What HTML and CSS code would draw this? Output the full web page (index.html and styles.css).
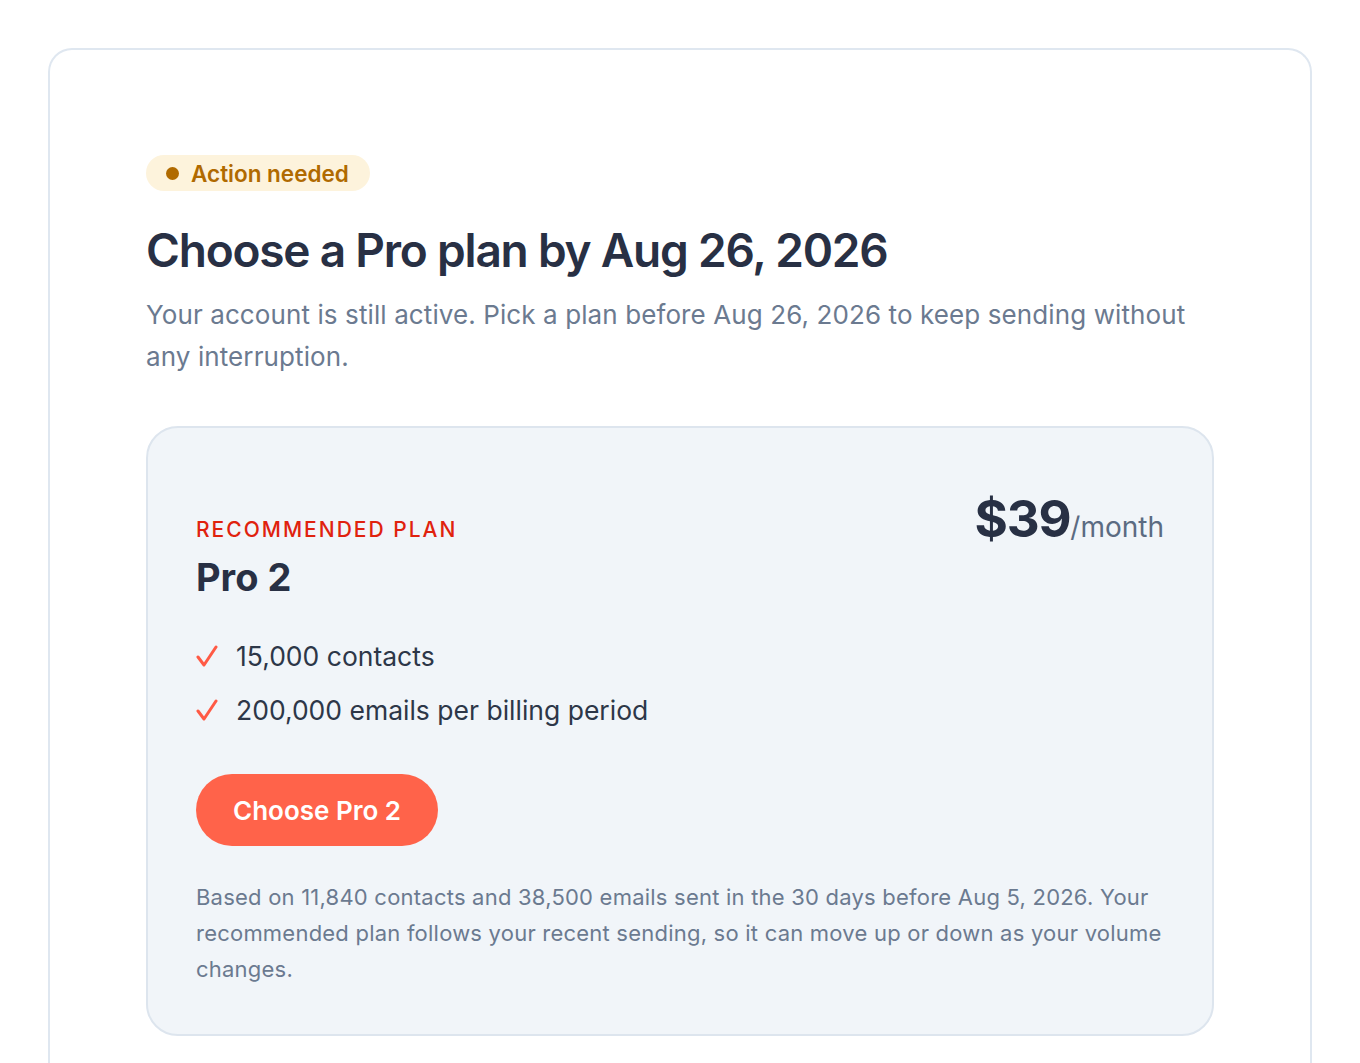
FILE: index.html
```html
<!DOCTYPE html>
<html lang="en">
<head>
    <meta charset="UTF-8">
    <meta name="viewport" content="width=device-width, initial-scale=1.0">
    <title>Choose a Pro plan</title>
    <link rel="stylesheet" href="styles.css">
</head>
<body>
    <div class="panel">
        <span class="badge"><span class="badge-dot"></span>Action needed</span>
        <h1>Choose a Pro plan by Aug 26, 2026</h1>
        <p class="lead">Your account is still active. Pick a plan before Aug 26, 2026 to keep sending without any interruption.</p>

        <section class="plan">
            <div class="plan-top">
                <div>
                    <div class="plan-label">Recommended plan</div>
                    <h2>Pro 2</h2>
                </div>
                <div class="price"><strong>$39</strong>/month</div>
            </div>

            <ul class="features">
                <li>
                    <svg class="check" viewBox="0 0 22 24" width="22" height="24"><path d="M2 13 L8 21 L20 3" fill="none" stroke="#ff5a45" stroke-width="3" stroke-linecap="round" stroke-linejoin="round"/></svg>
                    15,000 contacts
                </li>
                <li>
                    <svg class="check" viewBox="0 0 22 24" width="22" height="24"><path d="M2 13 L8 21 L20 3" fill="none" stroke="#ff5a45" stroke-width="3" stroke-linecap="round" stroke-linejoin="round"/></svg>
                    200,000 emails per billing period
                </li>
            </ul>

            <button type="button" class="choose">Choose Pro 2</button>

            <p class="note">Based on 11,840 contacts and 38,500 emails sent in the 30 days before Aug 5, 2026. Your recommended plan follows your recent sending, so it can move up or down as your volume changes.</p>
        </section>
    </div>
</body>
</html>
```

FILE: styles.css
```css
body {
    font-family: Inter, "Noto Sans", sans-serif;
    background-color: white;
    margin: 0;
    padding: 48px 48px 0 48px;
    color: #283044;
}

.panel {
    border: 2px solid #dfe7f0;
    border-bottom: none;
    border-radius: 24px 24px 0 0;
    padding: 105px 96px 40px 96px;
    min-height: 1000px;
}

.badge {
    display: inline-flex;
    align-items: center;
    gap: 12px;
    height: 36px;
    padding: 0 21px 0 20px;
    border-radius: 18px;
    background-color: #fdf3dc;
    color: #b06a00;
    font-size: 22.5px;
    font-weight: 600;
}

.badge-dot {
    width: 13px;
    height: 13px;
    border-radius: 50%;
    background-color: #b06a00;
}

h1 {
    margin: 30px 0 0 0;
    font-size: 46px;
    font-weight: 600;
    letter-spacing: -1.2px;
    line-height: 58px;
}

.lead {
    margin: 15px 0 0 0;
    font-size: 26px;
    letter-spacing: 0.1px;
    line-height: 42px;
    color: #6b7a90;
    max-width: 1060px;
}

.plan {
    margin-top: 48px;
    background-color: #f1f5f9;
    border: 2px solid #dde5ee;
    border-radius: 32px;
    padding: 58px 48px 47px 48px;
}

.plan-top {
    display: flex;
    justify-content: space-between;
    align-items: flex-start;
}

.plan-label {
    margin-top: 31px;
    color: #e0220e;
    font-size: 21px;
    font-weight: 500;
    letter-spacing: 2px;
    text-transform: uppercase;
}

h2 {
    margin: 12px 0 0 0;
    font-size: 38px;
    font-weight: 700;
}

.price {
    margin-top: 2px;
    font-size: 28px;
    color: #5b6b82;
}

.price strong {
    font-size: 51px;
    font-weight: 700;
    color: #283044;
    letter-spacing: -1.2px;
}

.features {
    list-style-type: none;
    margin: 29px 0 0 0;
    padding: 0;
}

.features li {
    display: flex;
    align-items: center;
    gap: 18px;
    font-size: 26.5px;
    line-height: 54px;
    color: #2d3748;
}

.check {
    flex-shrink: 0;
}

.choose {
    margin-top: 37px;
    height: 72px;
    padding: 0 37px;
    border: none;
    border-radius: 36px;
    background-color: #ff634a;
    color: white;
    font-family: inherit;
    font-size: 26px;
    font-weight: 600;
    cursor: pointer;
}

.note {
    margin: 33px -8px 0 0;
    font-size: 22px;
    letter-spacing: 0.22px;
    line-height: 36px;
    color: #6b7a90;
}
```
